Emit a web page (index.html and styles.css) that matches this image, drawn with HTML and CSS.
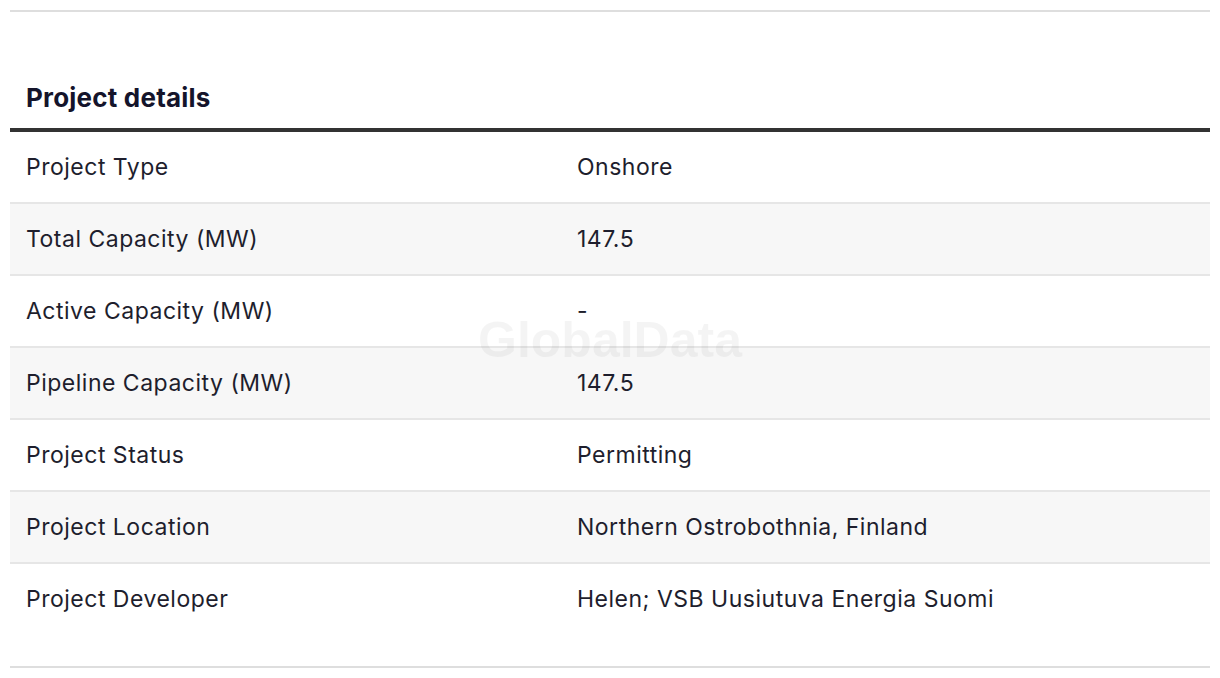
FILE: index.html
```html
<!DOCTYPE html>
<html lang="en">
<head>
<meta charset="utf-8">
<title>Project details</title>
<link rel="stylesheet" href="styles.css">
</head>
<body>
<div class="wrap">
  <section class="details">
    <h2 class="title">Project details</h2>
    <div class="table">
      <div class="row"><div class="label">Project Type</div><div class="value">Onshore</div></div>
      <div class="row alt"><div class="label">Total Capacity (MW)</div><div class="value">147.5</div></div>
      <div class="row"><div class="label">Active Capacity (MW)</div><div class="value">-</div></div>
      <div class="row alt"><div class="label">Pipeline Capacity (MW)</div><div class="value">147.5</div></div>
      <div class="row"><div class="label">Project Status</div><div class="value">Permitting</div></div>
      <div class="row alt"><div class="label">Project Location</div><div class="value">Northern Ostrobothnia, Finland</div></div>
      <div class="row last"><div class="label">Project Developer</div><div class="value">Helen; VSB Uusiutuva Energia Suomi</div></div>
      <div class="watermark" aria-hidden="true">GlobalData</div>
    </div>
  </section>
</div>
</body>
</html>
```

FILE: styles.css
```css
* { box-sizing: border-box; }
html, body { margin: 0; padding: 0; background: #fff; }
body {
  font-family: "Inter", "Liberation Sans", sans-serif;
  color: #1e1e2d;
}
.wrap { padding: 10px; }
.details {
  border-top: 2px solid #dedede;
  border-bottom: 2px solid #dedede;
  padding-bottom: 32px;
}
.title {
  margin: 0;
  padding: 70px 16px 14px;
  font-size: 26px;
  line-height: 32px;
  font-weight: 700;
  letter-spacing: 0.2px;
  color: #14142b;
}
.table {
  position: relative;
  border-top: 4px solid #333;
}
.row {
  display: grid;
  grid-template-columns: 551px 1fr;
  border-bottom: 2px solid #e6e6e6;
  background: #fff;
}
.row.alt { background: #f7f7f7; }
.row.last { border-bottom: none; }
.label, .value {
  padding: 20px 16px;
  font-size: 23px;
  line-height: 30px;
  font-weight: 400;
  letter-spacing: 0.5px;
}
.watermark {
  position: absolute;
  left: 0;
  right: 0;
  top: 180px;
  text-align: center;
  font-family: "Liberation Sans", Arial, sans-serif;
  font-weight: 700;
  font-size: 50px;
  line-height: 56px;
  color: rgba(0, 0, 0, 0.045);
  pointer-events: none;
}
```
